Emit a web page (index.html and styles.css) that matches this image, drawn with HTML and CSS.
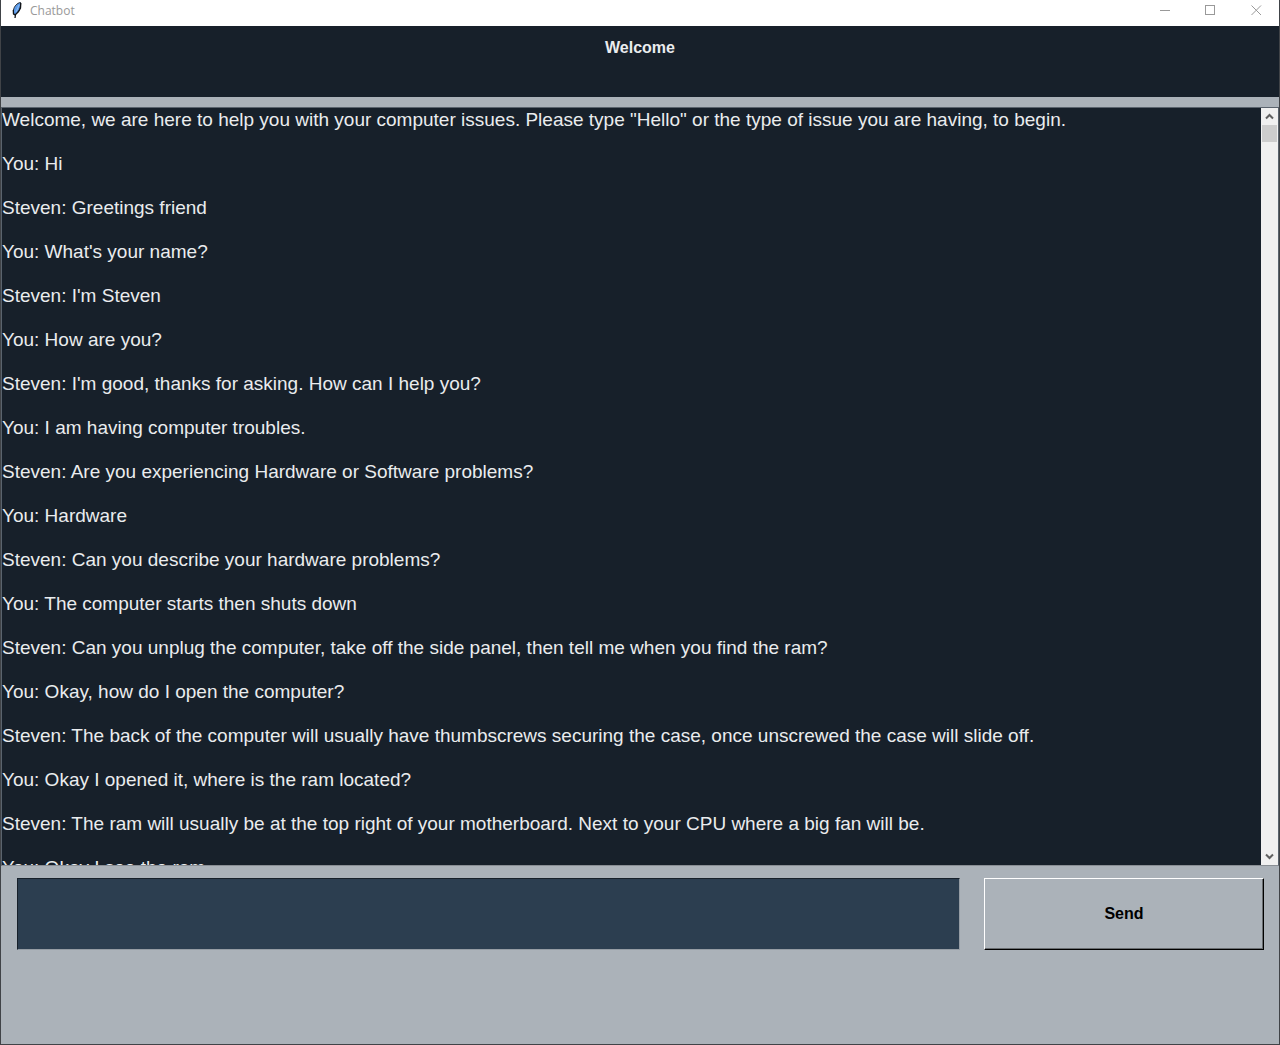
FILE: index.html
```html
<!DOCTYPE html>
<html lang="en">
<head>
<meta charset="utf-8">
<meta name="viewport" content="width=device-width, initial-scale=1">
<title>Chatbot</title>
<link rel="stylesheet" href="styles.css">
</head>
<body>
<div class="window">
  <header class="titlebar">
    <svg class="feather" width="12" height="18" viewBox="0 0 12 18" aria-hidden="true">
      <path d="M9.500 1.500C6 2 3 5.500 2.500 9L2.500 13L4.500 13.500C8 11 10 6.500 9.500 1.500Z" fill="#5b9bea" stroke="#23272d" stroke-width="1"/>
      <path d="M9.800 2L9.500 7L7.500 10.500L4.500 13.500L4 17M2.300 9L2.500 13L4 14" fill="none" stroke="#101418" stroke-width="1.3"/>
      <path d="M8 4L5 11" stroke="#8fbcf2" stroke-width="1"/>
    </svg>
    <span class="caption">Chatbot</span>
    <div class="controls">
      <button class="control" type="button" aria-label="Minimize"><svg width="11" height="11" viewBox="0 0 11 11" shape-rendering="crispEdges"><path d="M1 5.500H11"/></svg></button>
      <button class="control" type="button" aria-label="Maximize"><svg width="11" height="11" viewBox="0 0 11 11" shape-rendering="crispEdges"><path d="M.5 .5H9.500V9.500H.5Z"/></svg></button>
      <button class="control" type="button" aria-label="Close"><svg width="11" height="11" viewBox="0 0 11 11"><path d="M.5 .5L10 10M10 .5L.5 10"/></svg></button>
    </div>
  </header>
  <h1 class="banner">Welcome</h1>
  <main class="log">
    <div class="messages">
      <p>Welcome, we are here to help you with your computer issues. Please type "Hello" or the type of issue you are having, to begin.</p>
      <p>You: Hi</p>
      <p>Steven: Greetings friend</p>
      <p>You: What's your name?</p>
      <p>Steven: I'm Steven</p>
      <p>You: How are you?</p>
      <p>Steven: I'm good, thanks for asking. How can I help you?</p>
      <p>You: I am having computer troubles.</p>
      <p>Steven: Are you experiencing Hardware or Software problems?</p>
      <p>You: Hardware</p>
      <p>Steven: Can you describe your hardware problems?</p>
      <p>You: The computer starts then shuts down</p>
      <p>Steven: Can you unplug the computer, take off the side panel, then tell me when you find the ram?</p>
      <p>You: Okay, how do I open the computer?</p>
      <p>Steven: The back of the computer will usually have thumbscrews securing the case, once unscrewed the case will slide off.</p>
      <p>You: Okay I opened it, where is the ram located?</p>
      <p>Steven: The ram will usually be at the top right of your motherboard. Next to your CPU where a big fan will be.</p>
      <p>You: Okay I see the ram</p>
    </div>
    <div class="scrollbar">
      <button class="arrow" type="button" aria-label="Scroll up"><svg width="9" height="7" viewBox="0 0 9 7"><path d="M1 5.500L4.500 2L8 5.500"/></svg></button>
      <div class="track"><div class="thumb"></div></div>
      <button class="arrow" type="button" aria-label="Scroll down"><svg width="9" height="7" viewBox="0 0 9 7"><path d="M1 1.500L4.500 5L8 1.500"/></svg></button>
    </div>
  </main>
  <form class="composer">
    <input class="entry" type="text" aria-label="Message">
    <button class="send" type="button">Send</button>
  </form>
</div>
</body>
</html>
```
FILE: styles.css
```css
* {
  box-sizing: border-box;
}

body {
  margin: 0;
  font-family: "Liberation Sans", Arial, sans-serif;
}

button {
  margin: 0;
  padding: 0;
  border: 0;
  background: none;
  font: inherit;
}

.window {
  display: flex;
  flex-direction: column;
  height: 100vh;
  border: 1px solid #404347;
  border-top: 0;
  background: #abb2b9;
}

.titlebar {
  display: flex;
  flex: none;
  align-items: flex-start;
  height: 26px;
  padding-left: 10px;
  background: #fff;
}

.feather {
  margin-top: 1px;
}

.caption {
  flex: 1;
  padding-left: 7px;
  color: #999;
  font: 12px/22px "Open Sans", "Noto Sans", sans-serif;
}

.controls {
  display: flex;
}

.control {
  display: grid;
  place-items: center;
  width: 46px;
  height: 21px;
}

.control svg {
  fill: none;
  stroke: #999;
}

.banner {
  flex: none;
  height: 71px;
  margin: 0;
  padding-top: 12px;
  background: #17202a;
  color: #eaecee;
  font-size: 16px;
  font-weight: bold;
  line-height: 20px;
  text-align: center;
}

.log {
  display: flex;
  flex: 1;
  min-height: 0;
  margin-top: 10px;
  border: 1px solid #5a636d;
  border-bottom-color: #898e94;
  background: #17202a;
}

.messages {
  flex: 1;
  min-width: 0;
  padding-top: 1px;
  overflow: hidden;
  color: #eaecee;
  font-size: 19px;
  line-height: 22px;
}

.messages p {
  margin: 0 0 22px;
}

.scrollbar {
  display: flex;
  flex-direction: column;
  width: 17px;
  background: #f0f0f0;
}

.arrow {
  display: grid;
  place-items: center;
  height: 17px;
}

.arrow svg {
  fill: none;
  stroke: #606060;
  stroke-width: 2;
}

.track {
  flex: 1;
  padding: 0 1px;
}

.thumb {
  height: 17px;
  background: #cdcdcd;
}

.composer {
  display: flex;
  flex: none;
  gap: 24px;
  align-items: flex-start;
  height: 178px;
  padding: 12px 15px 0 16px;
}

.entry {
  flex: 1;
  min-width: 0;
  height: 72px;
  padding: 0 4px;
  border: 1px solid;
  border-color: #17202a #959ca4 #959ca4 #17202a;
  outline: 0;
  background: #2c3e50;
  color: #eaecee;
  font: inherit;
  font-size: 19px;
}

.send {
  flex: none;
  width: 280px;
  height: 72px;
  border: 1px solid;
  border-color: #fff #000 #000 #fff;
  box-shadow: inset -1px -1px #696d71;
  color: #000;
  font-size: 16px;
  font-weight: bold;
}
```
